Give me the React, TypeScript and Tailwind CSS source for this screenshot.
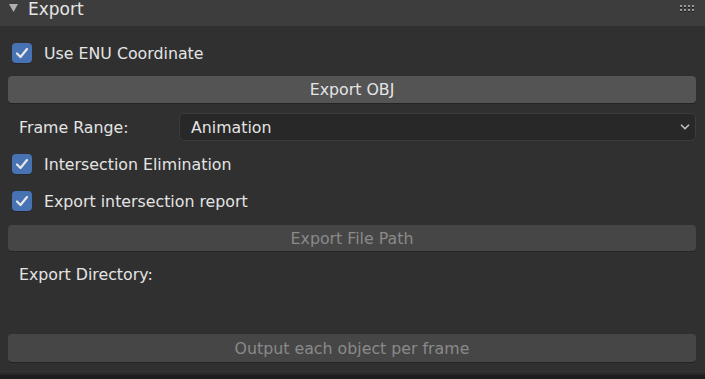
import { ChevronDown } from 'lucide-react';

const font = { fontFamily: '"DejaVu Sans", Verdana, sans-serif' };

const Check = ({ label }: { label: string }) => (
  <div className="flex items-center h-[26px] pl-[4px]">
    <div className="w-[20px] h-[20px] rounded-[4px] bg-[#4772b3] flex items-center justify-center shadow-[0_1px_0_#262626]">
      <svg width="14" height="12" viewBox="0 0 14 12">
        <path d="M2 6.5 L5.5 10 L12 2" fill="none" stroke="#e8e8e8" strokeWidth="2.2" strokeLinecap="round" strokeLinejoin="round" />
      </svg>
    </div>
    <span className="ml-[12px] text-[15.8px] leading-[20px] pt-[1px] text-[#e4e4e4]">{label}</span>
  </div>
);

const Btn = ({ label, disabled, h }: { label: string; disabled?: boolean; h: string }) => (
  <div
    className={`${h} rounded-[4px] flex items-center justify-center text-[15.8px] pt-[1px] shadow-[0_1px_0_#242424] ${
      disabled ? 'bg-[#464646] text-[#8a8a8a]' : 'bg-[#545454] text-[#e4e4e4]'
    }`}
  >
    {label}
  </div>
);

const App = () => {
  return (
    <div className="w-[705px] h-[379px] overflow-hidden bg-[#303030] flex flex-col" style={font}>
      {/* panel header */}
      <div className="h-[26px] bg-[#3d3d3d] flex items-start relative">
        <svg className="ml-[9px] mt-[4px]" width="9" height="8" viewBox="0 0 9 8">
          <path d="M0 0 H9 L4.5 8 Z" fill="#b0b0b0" />
        </svg>
        <span className="ml-[10px] text-[17px] leading-[18px] text-[#e6e6e6]">Export</span>
        <svg className="absolute right-[11px] top-[5px]" width="14" height="7" viewBox="0 0 14 7">
          {[0, 4, 8, 12].map(x =>
            [0, 4].map(y => (
              <g key={`${x}-${y}`}>
                <rect x={x} y={y} width="2" height="2" fill="#9a9a9a" />
                <rect x={x} y={y + 2} width="2" height="1" fill="#1e1e1e" />
              </g>
            ))
          )}
        </svg>
      </div>

      {/* panel body */}
      <div className="flex-1 flex flex-col px-[8px] pr-[9px]">
        <div className="mt-[14px]">
          <Check label="Use ENU Coordinate" />
        </div>

        <div className="mt-[10px]">
          <Btn label="Export OBJ" h="h-[27px]" />
        </div>

        <div className="mt-[10px] flex items-center h-[28px]">
          <span className="w-[171px] pl-[11px] pt-[1px] text-[15.8px] text-[#e4e4e4]">Frame Range:</span>
          <div className="flex-1 h-[28px] rounded-[5px] bg-[#282828] border border-[#3c3c3c] flex items-center pl-[11px] pr-[3px]">
            <span className="flex-1 pt-[1px] text-[15.8px] text-[#e4e4e4]">Animation</span>
            <ChevronDown size={14} strokeWidth={3} className="text-[#bdbdbd]" />
          </div>
        </div>

        <div className="mt-[10px]">
          <Check label="Intersection Elimination" />
        </div>
        <div className="mt-[11px]">
          <Check label="Export intersection report" />
        </div>

        <div className="mt-[11px]">
          <Btn label="Export File Path" disabled h="h-[26px]" />
        </div>

        <div className="mt-[10px] h-[26px] flex items-center pl-[11px] pt-[2px] text-[15.8px] text-[#e4e4e4]">
          Export Directory:
        </div>

        <div className="mt-[47px]">
          <Btn label="Output each object per frame" disabled h="h-[28px]" />
        </div>
      </div>

      <div className="h-[2px] bg-[#282828]" />
      <div className="h-[4px] bg-[#1d1d1d]" />
    </div>
  );
};

export default App;
